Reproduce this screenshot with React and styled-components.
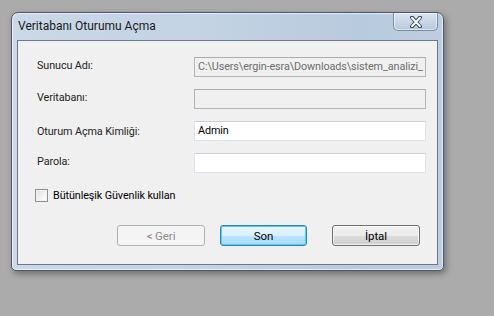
import React from "react";
import styled, { createGlobalStyle } from "styled-components";

const Global = createGlobalStyle`
  html, body { margin: 0; padding: 0; }
  body {
    background: #ababab;
    font-family: Roboto, "Noto Sans", "Liberation Sans", sans-serif;
    font-size: 10.8px;
    letter-spacing: -0.1px;
    color: #000;
  }
`;

const Desktop = styled.div`
  width: 494px;
  height: 316px;
  box-sizing: border-box;
  padding: 12px 0 0 11px;
  background: #ababab;
  overflow: hidden;
`;

const Window = styled.div`
  width: 433px;
  height: 259px;
  box-sizing: border-box;
  border: 1px solid #4d5866;
  border-radius: 7px 7px 5px 5px;
  background: linear-gradient(90deg, #cad8e7 0%, #c3d3e4 45%, #b8cadd 80%, #bccde0 100%);
  box-shadow: 2px 3px 6px rgba(0, 0, 0, 0.35), inset 0 0 0 1px rgba(255, 255, 255, 0.6);
  padding: 0 5px 5px 5px;
  display: flex;
  flex-direction: column;
`;

const TitleBar = styled.div`
  height: 27px;
  flex: none;
  display: flex;
  align-items: flex-start;
  justify-content: space-between;
`;

const Title = styled.div`
  padding: 6px 0 0 1px;
  font-size: 12px;
  letter-spacing: 0;
  color: #1a1a1a;
`;

const CloseButton = styled.div`
  width: 45px;
  height: 18px;
  box-sizing: border-box;
  border: 1px solid #7d8c9e;
  border-top: none;
  border-radius: 0 0 5px 5px;
  background: linear-gradient(180deg, #dae4ef 0%, #c8d6e6 50%, #b7c8dc 100%);
  box-shadow: inset 0 0 0 1px rgba(255, 255, 255, 0.5);
  display: flex;
  align-items: center;
  justify-content: center;
`;

const Client = styled.div`
  flex: 1;
  box-sizing: border-box;
  background: #f0f0f0;
  border: 1px solid #6b7888;
  padding: 16px 10px 0 19px;
  display: flex;
  flex-direction: column;
`;

const Form = styled.div`
  display: grid;
  grid-template-columns: 157px 232px;
  row-gap: 12px;
  align-items: center;
`;

const Label = styled.div`
  color: #1e1e1e;
  margin-top: ${(p) => (p.$raise ? "-3px" : "0")};
`;

const Field = styled.div`
  height: 20px;
  box-sizing: border-box;
  border: 1px solid ${(p) => (p.$disabled ? "#b4b4b4" : "#dde3ea")};
  border-top-color: ${(p) => (p.$disabled ? "#adadad" : "#c8d0d9")};
  background: ${(p) => (p.$disabled ? "#f0f0f0" : "#ffffff")};
  color: ${(p) => (p.$disabled ? "#6d6d6d" : "#000")};
  line-height: 18px;
  padding: 0 3px;
  white-space: nowrap;
  overflow: hidden;
`;

const CheckRow = styled.div`
  margin-top: 16px;
  display: flex;
  align-items: center;
  gap: 5px;
  margin-left: -2px;
`;

const CheckBox = styled.div`
  width: 13px;
  height: 13px;
  box-sizing: border-box;
  border: 1px solid #8f8f8f;
  background: linear-gradient(135deg, #dcdcdc 0%, #f4f4f4 60%, #ffffff 100%);
  box-shadow: inset 0 0 0 1px #f3f3f3;
`;

const ButtonRow = styled.div`
  margin-top: 23px;
  display: flex;
  padding-left: 80px;
`;

const Button = styled.div`
  width: ${(p) => p.$w || 88}px;
  height: 21px;
  margin-left: ${(p) => p.$gap || 0}px;
  box-sizing: border-box;
  border-radius: 3px;
  display: flex;
  align-items: center;
  justify-content: center;
  font-size: 11.5px;
  border: 1px solid
    ${(p) => (p.$variant === "disabled" ? "#adb2b5" : p.$variant === "default" ? "#3c7fb1" : "#707070")};
  color: ${(p) => (p.$variant === "disabled" ? "#8a8a8a" : "#000")};
  background: ${(p) =>
    p.$variant === "disabled"
      ? "#f4f4f4"
      : p.$variant === "default"
      ? "linear-gradient(180deg, #eaf6fd 0%, #d9f0fc 50%, #bee6fd 50%, #a7d9f5 100%)"
      : "linear-gradient(180deg, #f2f2f2 0%, #ebebeb 50%, #dddddd 50%, #cfcfcf 100%)"};
  box-shadow: ${(p) =>
    p.$variant === "default"
      ? "inset 0 0 0 1px #48d0f8"
      : p.$variant === "disabled"
      ? "none"
      : "inset 0 0 0 1px rgba(255,255,255,0.7)"};
`;

function CloseGlyph() {
  return (
    <svg width="14" height="12" viewBox="0 0 14 12">
      <path
        d="M3 1.5 L11 10.5 M11 1.5 L3 10.5"
        fill="none"
        stroke="#2d3a4a"
        strokeWidth="3.8"
        strokeLinecap="round"
      />
      <path
        d="M3 1.8 L11 10.2 M11 1.8 L3 10.2"
        fill="none"
        stroke="#ffffff"
        strokeWidth="2"
        strokeLinecap="round"
      />
    </svg>
  );
}

export default function App() {
  return (
    <>
      <Global />
      <Desktop>
        <Window>
          <TitleBar>
            <Title>Veritabanı Oturumu Açma</Title>
            <CloseButton>
              <CloseGlyph />
            </CloseButton>
          </TitleBar>
          <Client>
            <Form>
              <Label $raise>Sunucu Adı:</Label>
              <Field $disabled>C:\Users\ergin-esra\Downloads\sistem_analizi_</Field>
              <Label $raise>Veritabanı:</Label>
              <Field $disabled />
              <Label>Oturum Açma Kimliği:</Label>
              <Field>Admin</Field>
              <Label $raise>Parola:</Label>
              <Field />
            </Form>
            <CheckRow>
              <CheckBox />
              <span>Bütünleşik Güvenlik kullan</span>
            </CheckRow>
            <ButtonRow>
              <Button $variant="disabled">&lt; Geri</Button>
              <Button $variant="default" $w={87} $gap={15}>Son</Button>
              <Button $gap={25}>İptal</Button>
            </ButtonRow>
          </Client>
        </Window>
      </Desktop>
    </>
  );
}
